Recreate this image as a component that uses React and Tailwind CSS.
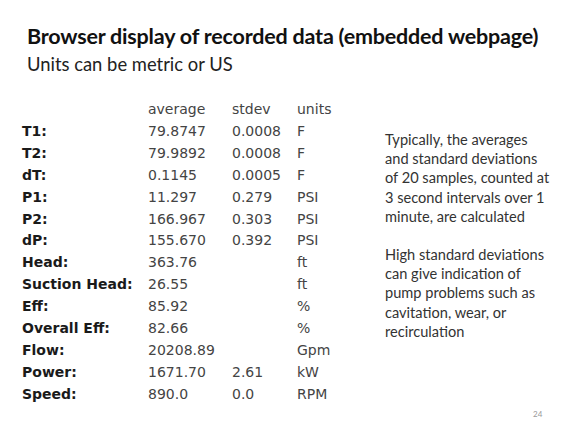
import React from "react";

const rows = [
  ["T1:", "79.8747", "0.0008", "F"],
  ["T2:", "79.9892", "0.0008", "F"],
  ["dT:", "0.1145", "0.0005", "F"],
  ["P1:", "11.297", "0.279", "PSI"],
  ["P2:", "166.967", "0.303", "PSI"],
  ["dP:", "155.670", "0.392", "PSI"],
  ["Head:", "363.76", "", "ft"],
  ["Suction Head:", "26.55", "", "ft"],
  ["Eff:", "85.92", "", "%"],
  ["Overall Eff:", "82.66", "", "%"],
  ["Flow:", "20208.89", "", "Gpm"],
  ["Power:", "1671.70", "2.61", "kW"],
  ["Speed:", "890.0", "0.0", "RPM"],
];

export default function App() {
  return (
    <div className="relative w-[576px] h-[432px] bg-white overflow-hidden">
      <div className="pl-[27px] pt-[23px] font-['Lato','Open_Sans',sans-serif] text-[#111]">
        <div className="text-[21.5px] font-bold leading-[26px] tracking-[-0.2px]">
          Browser display of recorded data (embedded webpage)
        </div>
        <div className="mt-[4px] text-[18.4px] leading-[22px] text-[#222]">Units can be metric or US</div>
      </div>
      <div className="flex mt-[24px]">
        <div className="pl-[22px] font-['DejaVu_Sans','Verdana',sans-serif] text-[14px] text-[#444]">
          <div className="grid grid-cols-[126px_84px_65px_60px] leading-[21.9px]">
            <div></div>
            <div>average</div>
            <div>stdev</div>
            <div>units</div>
            {rows.map((r) => (
              <React.Fragment key={r[0]}>
                <div className="font-bold text-[#1a1a1a] whitespace-nowrap">{r[0]}</div>
                <div>{r[1]}</div>
                <div>{r[2]}</div>
                <div>{r[3]}</div>
              </React.Fragment>
            ))}
          </div>
        </div>
        <div className="ml-[28px] mt-[31px] whitespace-nowrap font-['Lato','Open_Sans',sans-serif] text-[14.6px] leading-[19.2px] text-[#333]">
          <p>
            Typically, the averages
            <br />
            and standard deviations
            <br />
            of 20 samples, counted at
            <br />
            3 second intervals over 1
            <br />
            minute, are calculated
          </p>
          <p className="mt-[19px]">
            High standard deviations
            <br />
            can give indication of
            <br />
            pump problems such as
            <br />
            cavitation, wear, or
            <br />
            recirculation
          </p>
        </div>
      </div>
      <div className="absolute left-[533px] top-[408px] text-[8px] text-[#999] font-['Lato',sans-serif]">24</div>
    </div>
  );
}
